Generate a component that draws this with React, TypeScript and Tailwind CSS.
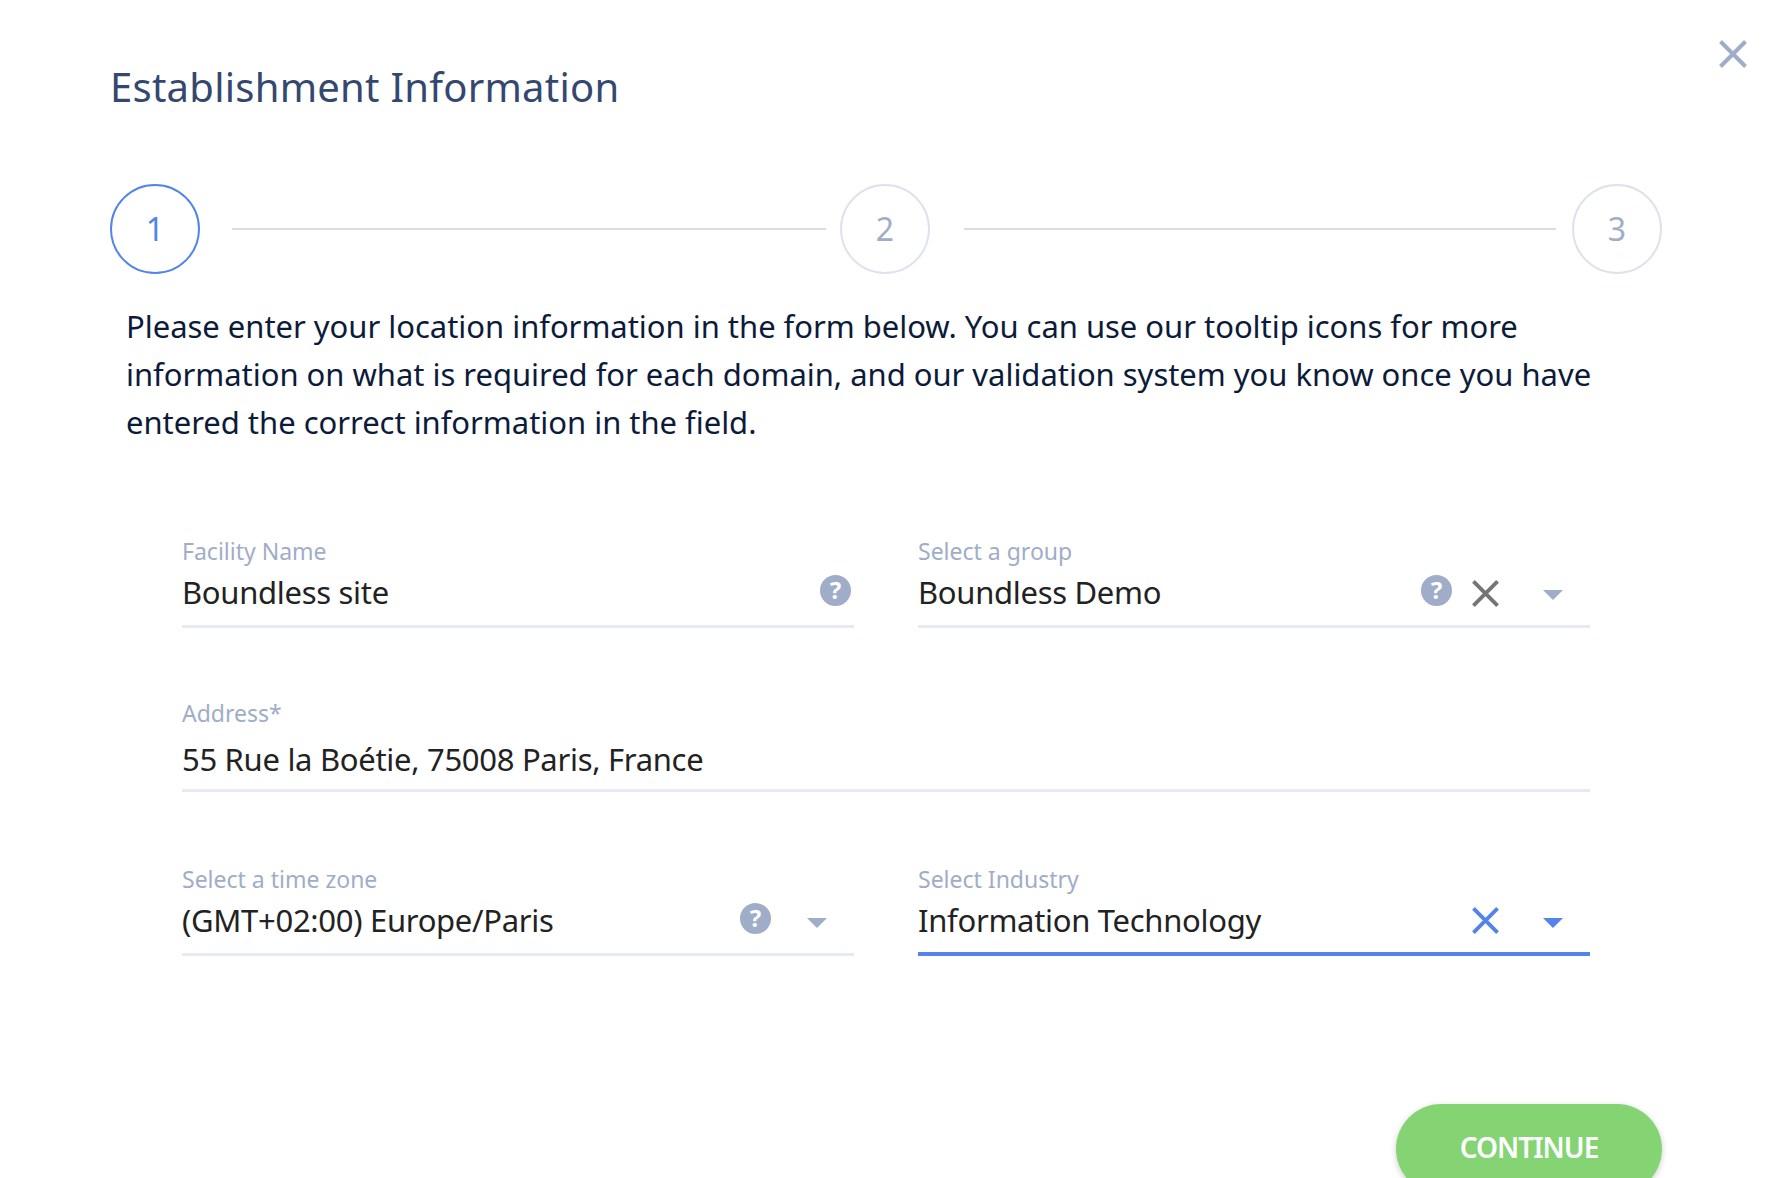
import { ReactNode } from "react";

function CloseIcon({ className }: { className: string }) {
  return (
    <svg viewBox="0 0 28 28" className={className} fill="none" stroke="currentColor" strokeWidth="4">
      <path d="M1.5 1.5 26.5 26.5M26.5 1.5 1.5 26.5" />
    </svg>
  );
}

function Caret({ className }: { className: string }) {
  return (
    <svg viewBox="0 0 20 10" className={className} fill="currentColor">
      <path d="M0 0h20L10 10z" />
    </svg>
  );
}

function Help() {
  return (
    <span className="flex h-[31px] w-[31px] items-center justify-center rounded-full bg-[#9fadc8] text-[24px] leading-none font-bold text-white">
      ?
    </span>
  );
}

function Step({ n, active }: { n: number; active?: boolean }) {
  return (
    <div
      className={`flex h-[90px] w-[90px] shrink-0 items-center justify-center rounded-full border-2 text-[32px] ${
        active ? "border-[#5284ea] text-[#5284ea]" : "border-[#dde2ee] text-[#9fadc8]"
      }`}
    >
      {n}
    </div>
  );
}

function Field({
  label,
  value,
  children,
  focused,
  className,
  tall,
}: {
  label: string;
  value: string;
  children?: ReactNode;
  focused?: boolean;
  className?: string;
  tall?: boolean;
}) {
  return (
    <div className={className}>
      <div className="h-[32px] text-[23px] leading-[32px] text-[#9fadc8]">{label}</div>
      <div
        className={`flex items-center justify-between ${tall ? "h-[63px]" : "h-[61px] pb-[8px]"} ${
          focused ? "border-b-4 border-[#5284ea]" : "border-b-[3px] border-[#e6eaf3]"
        }`}
      >
        <span className="text-[31px] leading-[40px] tracking-[-0.3px] text-[#222222]">{value}</span>
        {children}
      </div>
    </div>
  );
}

export default function App() {
  return (
    <div className="relative h-[1178px] overflow-hidden bg-white pt-[61px] pl-[110px] pr-[128px] font-['Noto_Sans',sans-serif]">
      <button className="absolute top-[40px] right-[43px] text-[#9fadc8]">
        <CloseIcon className="h-[28px] w-[28px]" />
      </button>

      <h1 className="text-[40px] leading-[52px] tracking-[0.25px] text-[#34486f]">Establishment Information</h1>

      <div className="mt-[71px] flex items-center">
        <Step n={1} active />
        <div className="mr-[14px] ml-[32px] h-[2px] w-[594px] bg-[#dddddd]" />
        <Step n={2} />
        <div className="mr-[16px] ml-[34px] h-[2px] flex-1 bg-[#dddddd]" />
        <Step n={3} />
      </div>

      <p className="mt-[28px] w-[1500px] pl-[16px] text-[31px] leading-[48px] tracking-[-0.03px] text-[#0d1b3a]">
        Please enter your location information in the form below. You can use our tooltip icons for more
        <br />
        information on what is required for each domain, and our validation system you know once you have
        <br />
        entered the correct information in the field.
      </p>

      <div className="mt-[89px] ml-[72px] w-[1408px]">
        <div className="flex gap-[64px]">
          <Field label="Facility Name" value="Boundless site" className="w-[672px]">
            <span className="mr-[3px] mb-[4px]">
              <Help />
            </span>
          </Field>
          <Field label="Select a group" value="Boundless Demo" className="w-[672px]">
            <div className="mr-[27px] flex items-center">
              <span className="mr-[2px] mb-[4px]">
                <Help />
              </span>
              <CloseIcon className="mt-[2px] ml-[18px] h-[27px] w-[27px] text-[#757575]" />
              <Caret className="mt-[6px] ml-[44px] h-[10px] w-[20px] text-[#9fadc8]" />
            </div>
          </Field>
        </div>

        <Field label="Address*" value="55 Rue la Boétie, 75008 Paris, France" tall className="mt-[69px]" />

        <div className="mt-[71px] flex gap-[64px]">
          <Field label="Select a time zone" value="(GMT+02:00) Europe/Paris" className="w-[672px]">
            <div className="mr-[27px] flex items-center">
              <span className="mb-[4px]">
                <Help />
              </span>
              <Caret className="mt-[6px] ml-[36px] h-[10px] w-[20px] text-[#9fadc8]" />
            </div>
          </Field>
          <Field label="Select Industry" value="Information Technology" focused className="w-[672px]">
            <div className="mr-[27px] flex items-center">
              <CloseIcon className="mt-[2px] h-[27px] w-[27px] text-[#5284ea]" />
              <Caret className="mt-[6px] ml-[44px] h-[10px] w-[20px] text-[#5284ea]" />
            </div>
          </Field>
        </div>
      </div>

      <div className="mt-[148px] flex justify-end">
        <button className="h-[90px] w-[266px] rounded-[45px] bg-[#84d474] pb-[4px] text-[28px] font-semibold tracking-[-1px] text-white shadow-[0_2px_6px_rgba(0,0,0,0.2)]">
          CONTINUE
        </button>
      </div>
    </div>
  );
}
